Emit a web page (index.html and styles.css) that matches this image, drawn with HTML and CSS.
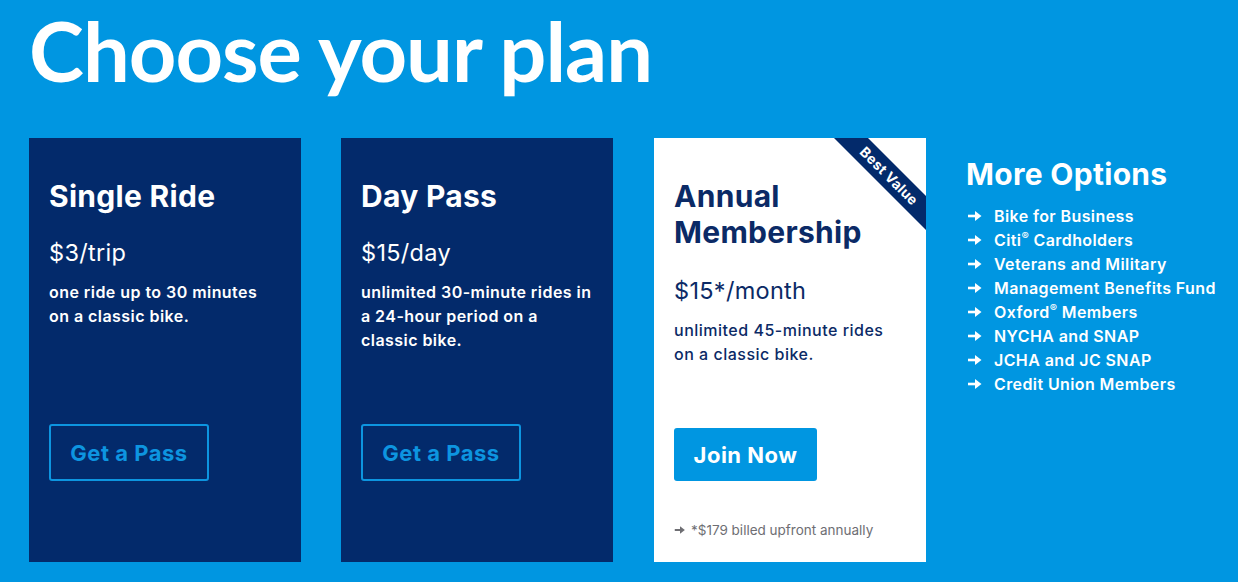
FILE: index.html
```html
<!DOCTYPE html>
<html lang="en">
<head>
<meta charset="utf-8">
<title>Choose your plan</title>
<link rel="stylesheet" href="styles.css">
</head>
<body>
<main class="page">
  <h1 class="page-title">Choose your plan</h1>
  <div class="plans">
    <section class="card card-dark">
      <h2 class="card-title">Single Ride</h2>
      <p class="card-price">$3/trip</p>
      <p class="card-desc">one ride up to 30 minutes on a classic bike.</p>
      <a class="btn btn-outline" href="#">Get a Pass</a>
      <div class="card-foot"></div>
    </section>
    <section class="card card-dark">
      <h2 class="card-title">Day Pass</h2>
      <p class="card-price">$15/day</p>
      <p class="card-desc">unlimited 30-minute rides in a 24-hour period on a classic bike.</p>
      <a class="btn btn-outline" href="#">Get a Pass</a>
      <div class="card-foot"></div>
    </section>
    <section class="card card-light">
      <div class="ribbon">Best Value</div>
      <h2 class="card-title">Annual Membership</h2>
      <p class="card-price">$15*/month</p>
      <p class="card-desc">unlimited 45-minute rides on a classic bike.</p>
      <a class="btn btn-solid" href="#">Join Now</a>
      <div class="card-foot">
        <p class="footnote"><svg class="arrow arrow-sm" viewBox="0 0 16 12" aria-hidden="true"><path d="M1 6h9" /><path class="head" d="M8 1 14.5 6 8 11z" /></svg><span>*$179 billed upfront annually</span></p>
      </div>
    </section>
    <aside class="more">
      <h2 class="more-title">More Options</h2>
      <ul class="more-list">
        <li><svg class="arrow" viewBox="0 0 16 12" aria-hidden="true"><path d="M1 6h9" /><path class="head" d="M8 1 14.5 6 8 11z" /></svg><span>Bike for Business</span></li>
        <li><svg class="arrow" viewBox="0 0 16 12" aria-hidden="true"><path d="M1 6h9" /><path class="head" d="M8 1 14.5 6 8 11z" /></svg><span>Citi<sup>®</sup> Cardholders</span></li>
        <li><svg class="arrow" viewBox="0 0 16 12" aria-hidden="true"><path d="M1 6h9" /><path class="head" d="M8 1 14.5 6 8 11z" /></svg><span>Veterans and Military</span></li>
        <li><svg class="arrow" viewBox="0 0 16 12" aria-hidden="true"><path d="M1 6h9" /><path class="head" d="M8 1 14.5 6 8 11z" /></svg><span>Management Benefits Fund</span></li>
        <li><svg class="arrow" viewBox="0 0 16 12" aria-hidden="true"><path d="M1 6h9" /><path class="head" d="M8 1 14.5 6 8 11z" /></svg><span>Oxford<sup>®</sup> Members</span></li>
        <li><svg class="arrow" viewBox="0 0 16 12" aria-hidden="true"><path d="M1 6h9" /><path class="head" d="M8 1 14.5 6 8 11z" /></svg><span>NYCHA and SNAP</span></li>
        <li><svg class="arrow" viewBox="0 0 16 12" aria-hidden="true"><path d="M1 6h9" /><path class="head" d="M8 1 14.5 6 8 11z" /></svg><span>JCHA and JC SNAP</span></li>
        <li><svg class="arrow" viewBox="0 0 16 12" aria-hidden="true"><path d="M1 6h9" /><path class="head" d="M8 1 14.5 6 8 11z" /></svg><span>Credit Union Members</span></li>
      </ul>
    </aside>
  </div>
</main>
</body>
</html>
```

FILE: styles.css
```css
* { box-sizing: border-box; }
html, body {
  margin: 0;
  height: 100%;
  background: #0096e1;
}
body {
  font-family: Inter, "Open Sans", sans-serif;
  color: #fff;
  overflow: hidden;
}
.page {
  padding: 0 0 0 29px;
}
.page-title {
  margin: 0;
  height: 138px;
  padding: 0;
  font-family: Lato, sans-serif;
  font-size: 83px;
  line-height: 100px;
  font-weight: 700;
  letter-spacing: -1px;
  color: #fff;
}
.plans {
  display: flex;
  gap: 40px;
  align-items: flex-start;
}
.card {
  position: relative;
  overflow: hidden;
  width: 272px;
  height: 424px;
  padding: 40px 20px 0;
  display: flex;
  flex-direction: column;
  align-items: flex-start;
  flex: none;
}
.card-light { margin-left: 1px; }
.card-dark { background: #032a6b; color: #fff; }
.card-light { background: #fff; color: #0b2a66; }
.card-title {
  margin: 0;
  font-size: 30px;
  line-height: 36px;
  font-weight: 700;
  letter-spacing: 0.3px;
}
.card-price {
  margin: 23px 0 0;
  font-size: 23.5px;
  line-height: 32px;
  font-weight: 400;
  letter-spacing: 0.3px;
}
.card-light .card-price { margin-top: 25px; }
.card-desc {
  margin: 11px 0 0;
  font-size: 16px;
  line-height: 24px;
  font-weight: 600;
  letter-spacing: 0.45px;
  flex: 1;
}
.card-light .card-desc {
  font-weight: 500;
  letter-spacing: 0.5px;
}
.btn {
  display: inline-flex;
  align-items: center;
  justify-content: center;
  height: 53px;
  font-size: 22px;
  font-weight: 700;
  letter-spacing: 0.5px;
  text-decoration: none;
  border-radius: 3px;
}
.btn-outline {
  height: 57px;
  width: 160px;
  border: 2px solid #0d95e0;
  color: #0d95e0;
}
.btn-solid {
  width: 143px;
  background: #0096e1;
  color: #fff;
}
.card-foot {
  height: 81px;
  flex: none;
  align-self: stretch;
}
.footnote {
  margin: 39px 0 0;
  font-size: 13.5px;
  line-height: 20px;
  color: #6e6e73;
  display: flex;
  align-items: center;
  gap: 5px;
}
.ribbon {
  position: absolute;
  top: 38px;
  right: -63px;
  width: 200px;
  height: 24px;
  margin-top: -12px;
  transform: rotate(45deg);
  background: #032a6b;
  color: #fff;
  font-size: 14px;
  font-weight: 700;
  letter-spacing: 0.3px;
  line-height: 24px;
  text-align: center;
}
.more {
  flex: none;
  padding-top: 18px;
  white-space: nowrap;
}
.more-title {
  margin: 0;
  font-size: 30px;
  line-height: 36px;
  font-weight: 700;
  letter-spacing: 0.3px;
}
.more-list {
  list-style: none;
  margin: 12px 0 0;
  padding: 0;
}
.more-list li {
  display: flex;
  align-items: center;
  font-size: 16px;
  line-height: 24px;
  font-weight: 600;
  letter-spacing: 0.4px;
}
.arrow {
  width: 16px;
  height: 12px;
  margin: 0 11px 0 1px;
  flex: none;
}
.arrow path {
  stroke: currentColor;
  stroke-width: 2.6;
  fill: none;
}
.arrow path.head {
  stroke: none;
  fill: currentColor;
}
.arrow-sm {
  width: 12px;
  height: 10px;
  margin: 0;
}
sup {
  font-size: 11px;
  line-height: 0;
  vertical-align: 6px;
}
```
